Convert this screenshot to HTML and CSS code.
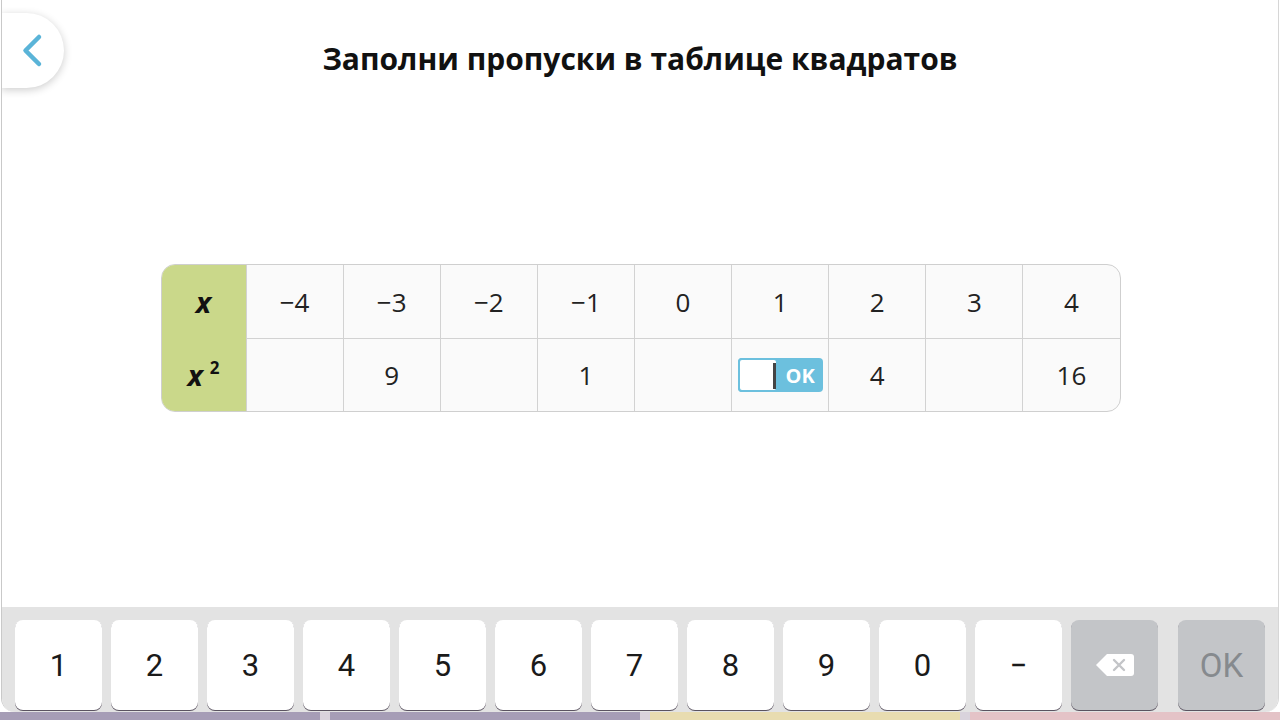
FILE: index.html
```html
<!DOCTYPE html>
<html>
<head>
<meta charset="utf-8">
<title>Таблица квадратов</title>
<link rel="stylesheet" href="styles.css">
</head>
<body>
<div class="page">
  <!-- back button -->
  <button class="back" title="Назад">
    <svg width="62" height="75" viewBox="0 0 62 75">
      <polyline points="38,24 24.5,37.5 38,51" fill="none" stroke="#5ab4d8" stroke-width="4.5" stroke-linecap="round" stroke-linejoin="round"/>
    </svg>
  </button>

  <h1 class="title">Заполни пропуски в таблице квадратов</h1>

  <!-- task table -->
  <div class="board">
    <div class="grid">
      <div class="cell head"><i>x</i></div>
      <div class="cell">−4</div>
      <div class="cell">−3</div>
      <div class="cell">−2</div>
      <div class="cell">−1</div>
      <div class="cell">0</div>
      <div class="cell">1</div>
      <div class="cell">2</div>
      <div class="cell">3</div>
      <div class="cell">4</div>

      <div class="cell head low"><i>x</i><sup>2</sup></div>
      <div class="cell low"></div>
      <div class="cell low">9</div>
      <div class="cell low"></div>
      <div class="cell low">1</div>
      <div class="cell low"></div>
      <div class="cell low">
        <div class="answer">
          <span class="field"><span class="caret"></span></span>
          <span class="answerOk">OK</span>
        </div>
      </div>
      <div class="cell low">4</div>
      <div class="cell low"></div>
      <div class="cell low">16</div>
    </div>
  </div>

  <!-- number keyboard -->
  <div class="keyboard">
    <button class="key">1</button>
    <button class="key">2</button>
    <button class="key">3</button>
    <button class="key">4</button>
    <button class="key">5</button>
    <button class="key">6</button>
    <button class="key">7</button>
    <button class="key">8</button>
    <button class="key">9</button>
    <button class="key">0</button>
    <button class="key">−</button>
    <button class="key off">
      <svg width="40" height="24" viewBox="0 0 40 24">
        <path d="M12 1 H36 Q39 1 39 4 V20 Q39 23 36 23 H12 L1 12 Z" fill="#fff"/>
        <path d="M19 7 L29 17 M29 7 L19 17" stroke="#c3c5c8" stroke-width="2.4" stroke-linecap="round"/>
      </svg>
    </button>
    <button class="key off okKey">OK</button>
  </div>
</div>

<!-- cards behind -->
<div class="strip">
  <div class="band violet"></div>
  <div class="band violet"></div>
  <div class="band sand"></div>
  <div class="band rose"></div>
</div>
</body>
</html>
```

FILE: styles.css
```css
html, body {
margin: 0;
padding: 0;
}
body {
width: 1280px;
height: 720px;
overflow: hidden;
background: #fff;
font-family: "Open Sans", "Noto Sans", sans-serif;
display: flex;
flex-direction: column;
}
.page {
position: relative;
height: 712px;
margin: 0 1px 0 1px;
border-left: 1px solid #c9c9c9;
border-right: 1px solid #d6d6d6;
border-radius: 0 0 14px 14px;
overflow: hidden;
background: #fff;
display: flex;
flex-direction: column;
}
.back {
position: absolute;
top: 13px;
left: -1px;
width: 63px;
height: 75px;
padding: 0;
border: none;
border-radius: 0 38px 38px 0;
background: #fff;
box-shadow: 0 2px 9px rgba(0, 0, 0, 0.2);
cursor: pointer;
z-index: 2;
}
.back svg {
display: block;
}
.title {
margin: 0;
padding-top: 38px;
line-height: 42px;
font-size: 30px;
font-weight: 700;
text-align: center;
color: #111;
}
.board {
padding-top: 184px;
display: flex;
justify-content: center;
}
.grid {
width: 958px;
margin-left: 1px;
display: grid;
grid-template-columns: 84px repeat(9, 1fr);
grid-auto-rows: 73px;
border: 1px solid #cfcfcf;
border-radius: 14px;
overflow: hidden;
background: #fafafa;
}
.cell {
display: flex;
align-items: center;
justify-content: center;
border-left: 1px solid #d2d2d2;
font-size: 26px;
color: #222;
}
.low {
border-top: 1px solid #d2d2d2;
}
.head {
border: none;
background: #cad88a;
font-weight: 700;
font-size: 29px;
color: #111;
}
.head sup {
font-size: 17px;
font-style: normal;
margin-left: 7px;
position: relative;
top: -7px;
}
.answer {
display: flex;
width: 85px;
height: 34px;
border-radius: 4px;
background: #6cc0de;
}
.field {
width: 36px;
height: 30px;
border: 2px solid #6cc0de;
border-radius: 4px;
background: #fff;
position: relative;
}
.caret {
position: absolute;
right: 0px;
top: 3px;
width: 3px;
height: 26px;
background: #444;
}
.answerOk {
flex: 1;
display: flex;
align-items: center;
justify-content: center;
color: #fff;
font-size: 20px;
font-weight: 700;
}
.keyboard {
margin-top: auto;
height: 92px;
padding: 13px 0 0 13px;
background: #e3e3e3;
display: flex;
gap: 9px;
}
.key {
width: 87px;
height: 90px;
padding: 0;
border: none;
border-radius: 8px;
background: #fff;
box-shadow: 0 1px 0 #5a5360;
font-family: Roboto, "Noto Sans", sans-serif;
font-size: 31px;
color: #1a1a1a;
display: flex;
align-items: center;
justify-content: center;
}
.off {
background: #c3c5c8;
}
.okKey {
margin-left: 11px;
font-size: 33px;
color: #868a8e;
}
.strip {
height: 8px;
display: flex;
gap: 10px;
background: #d9d3dc;
}
.band {
width: 310px;
}
.band:first-child {
width: 320px;
}
.violet {
background: #a69db6;
}
.sand {
background: #e8dcb0;
}
.rose {
background: #e4c3c7;
flex: 1;
}
```
